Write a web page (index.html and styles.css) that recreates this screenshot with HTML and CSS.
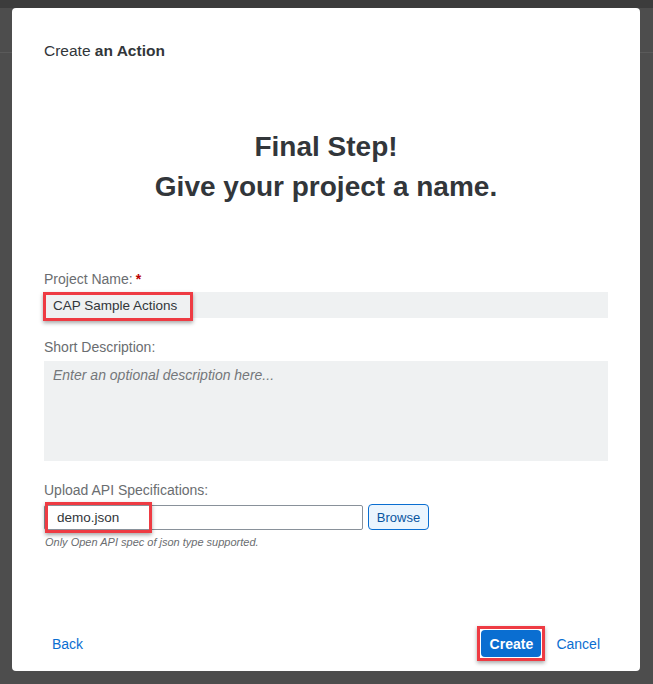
FILE: index.html
```html
<!DOCTYPE html>
<html lang="en">
<head>
<meta charset="utf-8">
<title>Create an Action</title>
<link rel="stylesheet" href="styles.css">
</head>
<body>
<div class="dialog">
  <div class="dialog-header">Create <b>an Action</b></div>
  <h1 class="headline">Final Step!<br>Give your project a name.</h1>
  <div class="form">
    <label class="label">Project Name:<span class="req">*</span></label>
    <div class="input filled">
      <span class="value">CAP Sample Actions</span>
      <span class="annot annot-name"></span>
    </div>
    <label class="label gap">Short Description:</label>
    <div class="textarea"><span class="placeholder">Enter an optional description here...</span></div>
    <label class="label gap">Upload API Specifications:</label>
    <div class="file-row">
      <div class="file-input">
        <span class="file-value">demo.json</span>
        <span class="annot annot-file"></span>
      </div>
      <button class="browse">Browse</button>
    </div>
    <div class="hint">Only Open API spec of json type supported.</div>
  </div>
  <div class="footer">
    <button class="link-btn">Back</button>
    <div class="footer-right">
      <span class="create-wrap">
        <button class="primary">Create</button>
        <span class="annot annot-create"></span>
      </span>
      <button class="link-btn">Cancel</button>
    </div>
  </div>
</div>
</body>
</html>
```

FILE: styles.css
```css
html, body {
  margin: 0;
  padding: 0;
}
body {
  width: 653px;
  height: 684px;
  box-sizing: border-box;
  padding: 8px 13px 13px 12px;
  background:
    linear-gradient(#3c3c3c, #3c3c3c) 0 0 / 100% 8px no-repeat,
    linear-gradient(#5a5a5a, #5a5a5a) 0 52px / 100% 1px no-repeat,
    #4d4d4d;
  font-family: "Liberation Sans", Arial, sans-serif;
  color: #32363a;
  overflow: hidden;
}
.dialog {
  height: 663px;
  box-sizing: border-box;
  background: #fff;
  border-radius: 4px;
  display: flex;
  flex-direction: column;
  padding: 34px 32px 14px 32px;
}
.dialog-header {
  font-size: 15.5px;
  line-height: 18px;
  color: #32363a;
}
.dialog-header b {
  font-weight: bold;
}
.headline {
  margin: 67px 0 0 0;
  text-align: center;
  font-size: 28px;
  line-height: 40px;
  font-weight: bold;
  color: #32363a;
}
.form {
  margin-top: 64px;
  display: flex;
  flex-direction: column;
}
.label {
  font-size: 14px;
  line-height: 16px;
  color: #6a6d70;
  margin-bottom: 5px;
}
.label.gap {
  margin-top: 21px;
}
.req {
  color: #bb0000;
  margin-left: 3px;
  font-weight: bold;
}
.input {
  position: relative;
  height: 26px;
  background: #eff1f2;
  display: flex;
  align-items: center;
  padding-left: 9px;
  font-size: 13.5px;
  color: #32363a;
}
.annot {
  position: absolute;
  box-sizing: border-box;
  border: 3px solid #ee3b43;
  box-shadow: 0 2px 4px rgba(0,0,0,0.35);
  pointer-events: none;
}
.annot-name {
  left: -1px;
  top: 0;
  width: 150px;
  height: 29px;
}
.textarea {
  height: 100px;
  background: #eff1f2;
  padding: 5px 9px;
  box-sizing: border-box;
  margin-top: 1px;
}
.placeholder {
  font-size: 14px;
  font-style: italic;
  color: #74777a;
}
.file-row {
  display: flex;
  align-items: center;
  gap: 5px;
  margin-top: 1px;
}
.file-input {
  position: relative;
  width: 319px;
  height: 25px;
  box-sizing: border-box;
  border: 1px solid #89919a;
  border-radius: 2px;
  background: #fff;
  display: flex;
  align-items: center;
  padding-left: 12px;
  font-size: 13.5px;
  color: #32363a;
}
.annot-file {
  left: 0;
  top: -4px;
  width: 107px;
  height: 31px;
}
.browse {
  height: 26px;
  width: 61px;
  box-sizing: border-box;
  border: 1px solid #0a6ed1;
  border-radius: 4px;
  background: #ebf5fe;
  color: #0854a0;
  font-family: "Liberation Sans", Arial, sans-serif;
  font-size: 13px;
  padding: 0;
}
.hint {
  margin-top: 6px;
  font-size: 11px;
  line-height: 13px;
  font-style: italic;
  color: #6a6d70;
  padding-left: 1px;
}
.footer {
  margin-top: auto;
  display: flex;
  justify-content: space-between;
  align-items: center;
  height: 27px;
}
.footer-right {
  display: flex;
  align-items: center;
  gap: 7px;
}
.link-btn {
  background: none;
  border: none;
  padding: 0 8px;
  height: 27px;
  color: #0a6ed1;
  font-family: "Liberation Sans", Arial, sans-serif;
  font-size: 14px;
}
.create-wrap {
  position: relative;
  display: inline-flex;
}
.primary {
  width: 60px;
  height: 27px;
  border: none;
  border-radius: 4px;
  background: #0a6ed1;
  color: #fff;
  font-family: "Liberation Sans", Arial, sans-serif;
  font-weight: bold;
  font-size: 14px;
  padding: 0;
}
.annot-create {
  left: -4px;
  top: -4px;
  width: 68px;
  height: 35px;
}
```
